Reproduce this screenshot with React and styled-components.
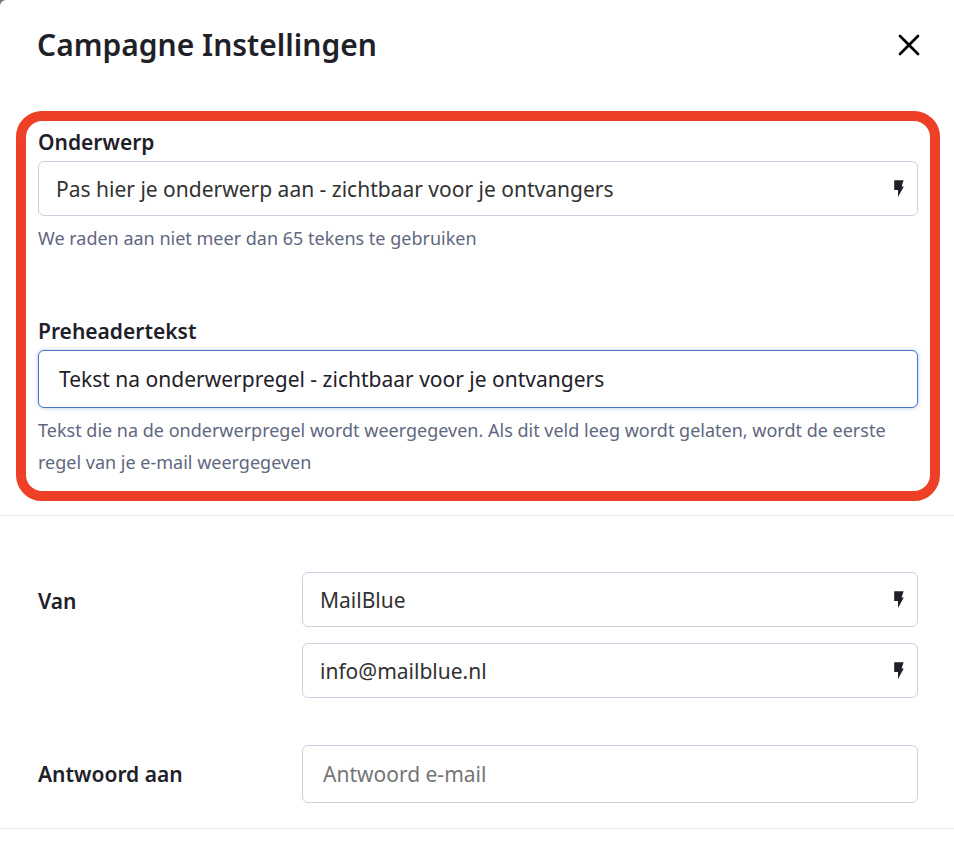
import React, { useState } from 'react';
import styled, { createGlobalStyle } from 'styled-components'

const colorText = '#1f2129'
const colorBorder = '#cdd0e0'
const colorLine = '#ececef'

const GlobalStyle = createGlobalStyle`
  * {
    box-sizing: border-box;
  }

  body {
    margin: 0;
    background: #77777a;
    color: ${colorText};
    font-family: 'Noto Sans', 'Open Sans', sans-serif;
  }
`

const Modal = styled.main`
  min-height: 100vh;
  background: #fff;
  border-radius: 6px 0 0 0;
`

const Header = styled.header`
  display: flex;
  align-items: center;
  justify-content: space-between;
  padding: 22px 34px 0 37px;
  height: 68px;
`

const Title = styled.h1`
  margin: 0;
  font-size: 30px;
  line-height: 44px;
  font-weight: 600;
`

const CloseButton = styled.button`
  display: flex;
  padding: 0;
  border: 0;
  background: none;
  color: #000;
  cursor: pointer;
`

const Highlight = styled.section`
  display: flex;
  flex-direction: column;
  gap: 62px;
  margin: 43px 14px 14px 16px;
  padding: 6px 12px 13px;
  border: 10px solid #ed4027;
  border-radius: 26px;
`

const Group = styled.div`
  display: flex;
  flex-direction: column;
`

const Label = styled.label`
  font-size: 21px;
  line-height: 30px;
  font-weight: 600;
`

const Help = styled.p`
  margin: 6px 0 0;
  color: #60677f;
  font-size: 18px;
  line-height: 32px;
`

const Field = styled.div`
  display: flex;
  align-items: center;
  height: ${(props) => props.$tall ? '58px' : '55px'};
  padding: 0 13px 0 ${(props) => props.$tall ? '20px' : '17px'};
  border: 1px solid ${colorBorder};
  border-radius: 6px;
  background: #fff;

  ${Group} > & {
    margin-top: 4px;
  }

  &:has(input[data-active='true']) {
    border-color: #4577c4;
    box-shadow: 0 0 4px rgba(69, 119, 196, 0.4);
  }
`

const Input = styled.input`
  flex: 1;
  min-width: 0;
  padding: 0;
  border: 0;
  outline: 0;
  background: none;
  color: ${(props) => props.$dark ? colorText : '#323232'};
  font-family: inherit;
  font-size: 21px;
  line-height: 30px;

  &::placeholder {
    color: #757575;
    opacity: 1;
  }
`

const BoltButton = styled.button`
  display: flex;
  padding: 0;
  border: 0;
  background: none;
  color: ${colorText};
  cursor: pointer;
`

const Settings = styled.section`
  display: flex;
  flex-direction: column;
  gap: 47px;
  padding: 56px 36px 25px 38px;
  border-top: 1px solid ${colorLine};
  border-bottom: 1px solid ${colorLine};
`

const Row = styled.div`
  display: grid;
  grid-template-columns: 3fr 7fr;
`

const RowLabel = styled(Label)`
  padding-top: 14px;
`

const Fields = styled.div`
  display: flex;
  flex-direction: column;
  gap: 16px;
`

const CloseIcon = () => (
  <svg width="22" height="22" viewBox="0 0 22 22" aria-hidden="true">
    <path d="M2 2L20 20M20 2L2 20" fill="none" stroke="currentColor" strokeWidth="2.7" strokeLinecap="round" />
  </svg>
)

const BoltIcon = () => (
  <svg width="10" height="18" viewBox="0 0 10 18" aria-hidden="true">
    <path d="M0.2 0.2H9.6L7.6 6.5H9.8L4 17V10H0.2Z" fill="currentColor" />
  </svg>
)

const TextField = ({ id, start = '', bolt, active, ...rest }) => {
  const [ value, setValue ] = useState(start)

  return (
    <Field $tall={!bolt}>
      <Input
        id={id}
        value={value}
        onChange={(e) => setValue(e.target.value)}
        data-active={active}
        $dark={active}
        {...rest}
      />
      { bolt && (
        <BoltButton type="button" aria-label="Personaliseren">
          <BoltIcon />
        </BoltButton>
      ) }
    </Field>
  )
}

const App = () => {
  return (
    <>
      <GlobalStyle />
      <Modal>
        <Header>
          <Title>Campagne Instellingen</Title>
          <CloseButton type="button" aria-label="Sluiten">
            <CloseIcon />
          </CloseButton>
        </Header>

        <Highlight>
          <Group>
            <Label htmlFor="subject">Onderwerp</Label>
            <TextField id="subject" start="Pas hier je onderwerp aan - zichtbaar voor je ontvangers" bolt />
            <Help>We raden aan niet meer dan 65 tekens te gebruiken</Help>
          </Group>
          <Group>
            <Label htmlFor="preheader">Preheadertekst</Label>
            <TextField id="preheader" start="Tekst na onderwerpregel - zichtbaar voor je ontvangers" active />
            <Help>
              Tekst die na de onderwerpregel wordt weergegeven. Als dit veld leeg wordt gelaten, wordt de eerste regel van je e-mail weergegeven
            </Help>
          </Group>
        </Highlight>

        <Settings>
          <Row>
            <RowLabel htmlFor="from-name">Van</RowLabel>
            <Fields>
              <TextField id="from-name" start="MailBlue" bolt />
              <TextField id="from-email" start="info@mailblue.nl" aria-label="Van e-mail" bolt />
            </Fields>
          </Row>
          <Row>
            <RowLabel htmlFor="reply-to">Antwoord aan</RowLabel>
            <TextField id="reply-to" placeholder="Antwoord e-mail" />
          </Row>
        </Settings>
      </Modal>
    </>
  )
}

export default App
